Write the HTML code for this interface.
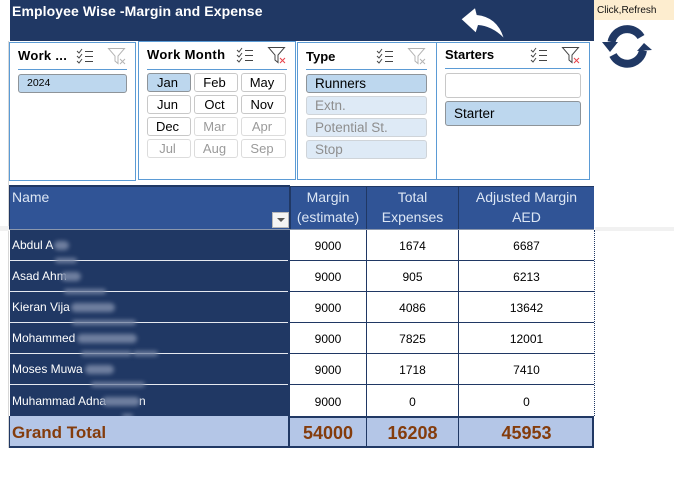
<!DOCTYPE html>
<html><head><meta charset="utf-8">
<style>
html,body{margin:0;padding:0;background:#fff}
body{width:674px;height:488px;position:relative;overflow:hidden;font-family:"Liberation Sans",sans-serif;color:#000}
.a{position:absolute;box-sizing:border-box}
.t{position:absolute;white-space:nowrap}
.s{position:absolute;box-sizing:border-box;background:#fff;border:1px solid #5b9bd5}
.h{position:absolute;font-weight:bold;font-size:13px;white-space:nowrap;line-height:16px}
.l{position:absolute;height:1px;background:#5b9bd5}
.b{position:absolute;box-sizing:border-box;border-radius:3px;text-align:center;font-size:13px;line-height:17px;height:19px;background:#fff;border:1px solid #c8c8c8;color:#000;padding-right:3px}
.sel{background:#bdd7ee;border-color:#8e9499}
.off{color:#9a9a9a;border-color:#dcdcdc}
.dim{background:#deeaf6;border-color:#cfd4d9;color:#8e8e8e;text-align:left;padding-left:8px;font-size:13.5px}
.c{position:absolute;text-align:center;font-size:12px;line-height:16px;white-space:nowrap}
.hd{color:#dce6f4;font-size:14px;line-height:20px}
.tot{color:#843c0c;font-weight:bold;font-size:18px;line-height:20px}
.n{position:absolute;left:12px;color:#fff;font-size:12px;line-height:14px;white-space:nowrap}
.bl{position:absolute;background:#6f7f9f;border-radius:5px;filter:blur(2px)}
</style></head><body>

<div class="a" style="left:8px;top:41px;width:1px;height:407px;background:#d8d8d8"></div>
<div class="a" style="left:0;top:226px;width:9px;height:5px;background:#f1f1f1"></div>
<div class="a" style="left:595px;top:227px;width:79px;height:4px;background:#f1f1f1"></div>

<!-- title bar -->
<div class="a" style="left:10px;top:0;width:584px;height:41px;background:#203864"></div>
<div class="t" style="left:12px;top:2px;color:#fff;font-weight:bold;font-size:14px;line-height:18px;letter-spacing:.1px">Employee Wise -Margin and Expense</div>
<svg class="a" style="left:0;top:0" width="674" height="70">
<path d="M461.7 19.3L475 8.3L476.7 15Q497 17 503.5 37.5Q492 26 478 25L475.7 32.3Z" fill="#fff"/>
<path d="M611.5 42A16 16 0 0 1 641 37M643 50.5A16 16 0 0 1 613 55" fill="none" stroke="#203864" stroke-width="8"/>
<path d="M602 42L618 42L610 52ZM637 51L652 50L644 43Z" fill="#203864"/>
</svg>
<div class="a" style="left:594px;top:0;width:80px;height:20px;background:#fdedcf"></div>
<div class="t" style="left:597px;top:4px;font-size:10px;line-height:13px;color:#111">Click,Refresh</div>

<!-- slicer 1 -->
<div class="s" style="left:9px;top:42px;width:127px;height:139px"></div>
<div class="h" style="left:18px;top:48px;letter-spacing:.3px">Work ...</div>
<div class="l" style="left:18px;top:69px;width:109px"></div>
<div class="b sel" style="left:18px;top:74px;width:109px;font-size:10.5px;text-align:left;padding-left:8px">2024</div>

<!-- slicer 2 -->
<div class="s" style="left:138px;top:41px;width:158px;height:139px"></div>
<div class="h" style="left:147px;top:47px;letter-spacing:.35px">Work Month</div>
<div class="l" style="left:147px;top:69px;width:140px"></div>
<div class="b sel" style="left:147px;top:73px;width:44px">Jan</div>
<div class="b" style="left:194px;top:73px;width:44px">Feb</div>
<div class="b" style="left:241px;top:73px;width:45px">May</div>
<div class="b" style="left:147px;top:95px;width:44px">Jun</div>
<div class="b" style="left:194px;top:95px;width:44px">Oct</div>
<div class="b" style="left:241px;top:95px;width:45px">Nov</div>
<div class="b" style="left:147px;top:117px;width:44px">Dec</div>
<div class="b off" style="left:194px;top:117px;width:44px">Mar</div>
<div class="b off" style="left:241px;top:117px;width:45px">Apr</div>
<div class="b off" style="left:147px;top:139px;width:44px">Jul</div>
<div class="b off" style="left:194px;top:139px;width:44px">Aug</div>
<div class="b off" style="left:241px;top:139px;width:45px">Sep</div>

<!-- slicer 3 -->
<div class="s" style="left:297px;top:42px;width:140px;height:138px"></div>
<div class="h" style="left:306px;top:49px">Type</div>
<div class="l" style="left:306px;top:69px;width:121px"></div>
<div class="b sel" style="left:306px;top:74px;width:121px;text-align:left;padding-left:8px;font-size:13.5px">Runners</div>
<div class="b dim" style="left:306px;top:96px;width:121px">Extn.</div>
<div class="b dim" style="left:306px;top:118px;width:121px">Potential St.</div>
<div class="b dim" style="left:306px;top:140px;width:121px">Stop</div>

<!-- slicer 4 -->
<div class="s" style="left:436px;top:42px;width:154px;height:138px"></div>
<div class="h" style="left:445px;top:47px">Starters</div>
<div class="l" style="left:445px;top:68px;width:136px"></div>
<div class="b" style="left:445px;top:73px;width:136px;height:25px"></div>
<div class="b sel" style="left:445px;top:101px;width:136px;height:25px;line-height:23px;text-align:left;padding-left:8px;font-size:13.5px">Starter</div>

<!-- slicer icons -->
<svg class="a" style="left:0;top:0" width="674" height="70" fill="none" stroke-width="1">
<defs>
<g id="ms" stroke="#444"><path d="M0 2L2 4L5 0M0 7L2 9L5 5M0 12L2 14L5 10"/><path d="M8 2.5H16M8 7.5H16M8 12.5H16"/></g>
<g id="fa" stroke="#b4b4b4"><path d="M.5 .5H16.5L10 8V15.5L7 13V8Z"/><path d="M12 11L17 16M17 11L12 16"/></g>
<g id="fr" stroke="#444"><path d="M.5 .5H16.5L10 8V15.5L7 13V8Z"/><path d="M12 11L17 16M17 11L12 16" stroke="#e8424a"/></g>
</defs>
<use href="#ms" x="77" y="49"/><use href="#fa" x="108" y="48"/>
<use href="#ms" x="237" y="48"/><use href="#fr" x="268" y="47"/>
<use href="#ms" x="377" y="49"/><use href="#fa" x="408" y="48"/>
<use href="#ms" x="531" y="48"/><use href="#fr" x="562" y="47"/>
</svg>

<!-- table -->
<div class="a" style="left:9px;top:186px;width:585px;height:43px;background:#305496"></div>
<div class="a" style="left:9px;top:185px;width:281px;height:2px;background:#203864"></div>
<div class="a" style="left:290px;top:186px;width:304px;height:1px;background:#203864"></div>
<div class="a" style="left:9px;top:186px;width:1px;height:43px;background:#203864"></div>
<div class="a" style="left:289px;top:186px;width:2px;height:43px;background:#203864"></div>
<div class="a" style="left:366px;top:186px;width:1px;height:43px;background:#203864"></div>
<div class="a" style="left:458px;top:186px;width:1px;height:43px;background:#203864"></div>
<div class="a" style="left:9px;top:229px;width:585px;height:1px;background:#8a97ad"></div>

<div class="t hd" style="left:12px;top:187px">Name</div>
<div class="a" style="left:272px;top:212px;width:17px;height:16px;background:#f4f4f4;border:1px solid #b8b8b8"></div>
<div class="a" style="left:277px;top:218px;width:0;height:0;border:4px solid transparent;border-top:4px solid #555"></div>

<div class="c hd" style="left:290px;top:187px;width:76px">Margin</div>
<div class="c hd" style="left:290px;top:207px;width:76px">(estimate)</div>
<div class="c hd" style="left:367px;top:187px;width:91px">Total</div>
<div class="c hd" style="left:367px;top:207px;width:91px">Expenses</div>
<div class="c hd" style="left:459px;top:187px;width:135px">Adjusted Margin</div>
<div class="c hd" style="left:459px;top:207px;width:135px">AED</div>

<!-- name column -->
<div class="a" style="left:10px;top:230px;width:280px;height:187px;background:#203864"></div>
<div class="a" style="left:10px;top:260px;width:278px;height:1px;background:#e6e9f0"></div>
<div class="a" style="left:10px;top:291px;width:278px;height:1px;background:#e6e9f0"></div>
<div class="a" style="left:10px;top:322px;width:278px;height:1px;background:#e6e9f0"></div>
<div class="a" style="left:10px;top:353px;width:278px;height:1px;background:#e6e9f0"></div>
<div class="a" style="left:10px;top:384px;width:278px;height:1px;background:#e6e9f0"></div>

<div class="n" style="top:238px">Abdul A</div>
<div class="n" style="top:269px">Asad Ahm</div>
<div class="n" style="top:300px">Kieran Vija</div>
<div class="n" style="top:331px">Mohammed</div>
<div class="n" style="top:362px">Moses Muwa</div>
<div class="n" style="top:394px">Muhammad Adna</div>
<div class="n" style="top:394px;left:139px">n</div>

<div class="bl" style="left:54px;top:241px;width:15px;height:9px"></div>
<div class="bl" style="left:55px;top:258px;width:22px;height:5px"></div>
<div class="bl" style="left:61px;top:272px;width:20px;height:9px"></div>
<div class="bl" style="left:64px;top:289px;width:42px;height:5px"></div>
<div class="bl" style="left:71px;top:303px;width:44px;height:9px"></div>
<div class="bl" style="left:72px;top:320px;width:64px;height:5px"></div>
<div class="bl" style="left:77px;top:334px;width:60px;height:9px"></div>
<div class="bl" style="left:81px;top:351px;width:51px;height:5px"></div>
<div class="bl" style="left:133px;top:351px;width:25px;height:5px"></div>
<div class="bl" style="left:85px;top:365px;width:29px;height:9px"></div>
<div class="bl" style="left:91px;top:382px;width:54px;height:5px"></div>
<div class="bl" style="left:102px;top:397px;width:38px;height:9px"></div>
<div class="bl" style="left:122px;top:414px;width:11px;height:4px"></div>

<!-- data grid lines -->
<div class="a" style="left:290px;top:260px;width:304px;height:1px;background:#203864"></div>
<div class="a" style="left:290px;top:291px;width:304px;height:1px;background:#203864"></div>
<div class="a" style="left:290px;top:322px;width:304px;height:1px;background:#203864"></div>
<div class="a" style="left:290px;top:353px;width:304px;height:1px;background:#203864"></div>
<div class="a" style="left:290px;top:384px;width:304px;height:1px;background:#203864"></div>
<div class="a" style="left:366px;top:230px;width:1px;height:186px;background:#203864"></div>
<div class="a" style="left:458px;top:230px;width:1px;height:186px;background:#203864"></div>
<div class="a" style="left:594px;top:230px;width:1px;height:186px;border-left:1px dotted #203864"></div>

<!-- data -->
<div class="c" style="left:290px;top:238px;width:76px">9000</div><div class="c" style="left:367px;top:238px;width:91px">1674</div><div class="c" style="left:459px;top:238px;width:135px">6687</div>
<div class="c" style="left:290px;top:269px;width:76px">9000</div><div class="c" style="left:367px;top:269px;width:91px">905</div><div class="c" style="left:459px;top:269px;width:135px">6213</div>
<div class="c" style="left:290px;top:300px;width:76px">9000</div><div class="c" style="left:367px;top:300px;width:91px">4086</div><div class="c" style="left:459px;top:300px;width:135px">13642</div>
<div class="c" style="left:290px;top:331px;width:76px">9000</div><div class="c" style="left:367px;top:331px;width:91px">7825</div><div class="c" style="left:459px;top:331px;width:135px">12001</div>
<div class="c" style="left:290px;top:362px;width:76px">9000</div><div class="c" style="left:367px;top:362px;width:91px">1718</div><div class="c" style="left:459px;top:362px;width:135px">7410</div>
<div class="c" style="left:290px;top:394px;width:76px">9000</div><div class="c" style="left:367px;top:394px;width:91px">0</div><div class="c" style="left:459px;top:394px;width:135px">0</div>

<!-- total -->
<div class="a" style="left:9px;top:416px;width:585px;height:32px;background:#b4c6e7;border-bottom:2px solid #203864;border-left:1px solid #203864;border-right:2px solid #203864"></div>
<div class="a" style="left:290px;top:416px;width:304px;height:2px;background:#203864"></div>
<div class="a" style="left:288px;top:416px;width:2px;height:31px;background:#203864"></div>
<div class="a" style="left:366px;top:416px;width:1px;height:31px;background:#203864"></div>
<div class="a" style="left:458px;top:416px;width:1px;height:31px;background:#203864"></div>
<div class="t tot" style="left:12px;top:423px;font-size:17px">Grand Total</div>
<div class="c tot" style="left:290px;top:423px;width:76px">54000</div>
<div class="c tot" style="left:367px;top:423px;width:91px">16208</div>
<div class="c tot" style="left:459px;top:423px;width:135px">45953</div>

</body></html>
